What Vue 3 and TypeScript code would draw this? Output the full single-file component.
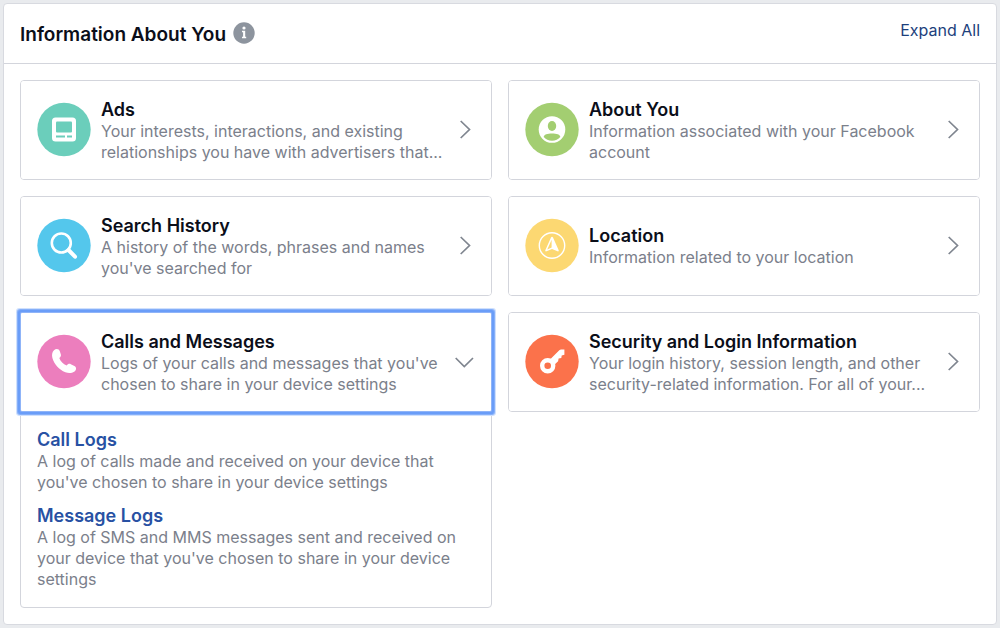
<script setup lang="ts">
import { computed, ref } from 'vue'

type IconName = 'ads' | 'about' | 'search' | 'location' | 'calls' | 'security'

interface Log {
  title: string
  text: string
}

interface Category {
  id: IconName
  title: string
  text: string
  color: string
  logs: Log[]
}

const categories: Category[] = [
  {
    id: 'ads',
    title: 'Ads',
    text: 'Your interests, interactions, and existing relationships you have with advertisers that...',
    color: '#6bcebb',
    logs: [],
  },
  {
    id: 'about',
    title: 'About You',
    text: 'Information associated with your Facebook account',
    color: '#a3ce71',
    logs: [],
  },
  {
    id: 'search',
    title: 'Search History',
    text: "A history of the words, phrases and names you've searched for",
    color: '#54c7ec',
    logs: [],
  },
  {
    id: 'location',
    title: 'Location',
    text: 'Information related to your location',
    color: '#fcd872',
    logs: [],
  },
  {
    id: 'calls',
    title: 'Calls and Messages',
    text: "Logs of your calls and messages that you've chosen to share in your device settings",
    color: '#ec7ebd',
    logs: [
      {
        title: 'Call Logs',
        text: "A log of calls made and received on your device that you've chosen to share in your device settings",
      },
      {
        title: 'Message Logs',
        text: "A log of SMS and MMS messages sent and received on your device that you've chosen to share in your device settings",
      },
    ],
  },
  {
    id: 'security',
    title: 'Security and Login Information',
    text: 'Your login history, session length, and other security-related information. For all of your...',
    color: '#fb724b',
    logs: [],
  },
]

const open = ref<IconName[]>(['calls'])
const active = ref<IconName | null>('calls')
const isOpen = computed(() => (id: IconName) => open.value.includes(id))

function toggle(id: IconName): void {
  active.value = id
  open.value = open.value.includes(id)
    ? open.value.filter((item) => item !== id)
    : [...open.value, id]
}

function expandAll(): void {
  open.value = categories.map((category) => category.id)
}
</script>

<template>
  <main class="page">
    <section class="panel" aria-labelledby="panel-title">
      <header class="panel-header">
        <div class="heading">
          <h1 id="panel-title">Information About You</h1>
          <button class="info" type="button" aria-label="More information">
            <svg viewBox="0 0 22 22" aria-hidden="true">
              <circle cx="11" cy="11" r="10.7" fill="#8d949e" />
              <circle cx="11" cy="6" r="1.6" fill="#fff" />
              <path d="M9 8.800h3.200v6h1v1.500H9v-1.500h1.100v-4.500H9z" fill="#fff" />
            </svg>
          </button>
        </div>
        <a class="expand" href="#" @click.prevent="expandAll">Expand All</a>
      </header>

      <div class="grid">
        <article v-for="category in categories" :key="category.id" class="card">
          <button
            class="card-head"
            :class="{ active: active === category.id }"
            type="button"
            :aria-expanded="isOpen(category.id)"
            @click="toggle(category.id)"
          >
            <svg class="icon" viewBox="0 0 54 54" aria-hidden="true">
              <circle cx="27" cy="26.5" r="26.7" :fill="category.color" />
              <g v-if="category.id === 'ads'">
                <rect x="15" y="14.500" width="24" height="24" rx="3.500" fill="#fff" />
                <rect x="19" y="18.500" width="16" height="11" rx="1" :fill="category.color" />
                <path d="M19 32.500h9v2h-9zM30 32.500h5v2h-5z" :fill="category.color" />
              </g>
              <g v-else-if="category.id === 'about'">
                <circle cx="27" cy="26.500" r="13.300" fill="#fff" />
                <ellipse cx="27" cy="23" rx="4.200" ry="5" :fill="category.color" />
                <path
                  d="M18.700 34c0-2.500 3.800-3.600 8.300-3.600s8.300 1.100 8.300 3.600c-1.900 2.300-5 3.700-8.300 3.700s-6.400-1.400-8.300-3.700z"
                  :fill="category.color"
                />
              </g>
              <g v-else-if="category.id === 'search'" fill="none" stroke="#fff">
                <circle cx="24.300" cy="24" r="9.500" stroke-width="2.600" />
                <path d="M31.500 31L38 37.700" stroke-width="4" stroke-linecap="round" />
              </g>
              <g v-else-if="category.id === 'location'">
                <circle cx="27" cy="26.500" r="12.700" fill="none" stroke="#fff" stroke-width="1.400" />
                <path
                  fill-rule="evenodd"
                  d="M26 18.500q1-1.500 2 0l5.700 12.800q.3 1.500-1.200 1l-5.500-2.200-5.500 2.200q-1.500.5-1.200-1zM26.600 20.800l-4.300 9.700 4.300-2z"
                  fill="#fff"
                />
              </g>
              <path
                v-else-if="category.id === 'calls'"
                d="M17 15.200c2-1.700 5-1.400 5.800 1l1 3c.5 1.600-.2 2.800-1.500 3.700 1.200 3.400 4 6.200 7.300 7.700 1.200-1.500 2.600-2.200 4.200-1.400l3.600 1.700c2.500 1.200 2 4.500-.3 5.900-2.200 1.500-5.700 1.700-8.700.5-6.300-2.600-11.300-8.200-13-14.300-.7-2.900-.4-6.100 1.600-7.800z"
                fill="#fff"
              />
              <g v-else>
                <path
                  d="M24 25.500l10.300-10.300q.8-.8 1.800-.8h3.300v5.400l-2.700.8-.4 2.500-2.700.5-.5 2.700-4.300 4z"
                  fill="#fff"
                />
                <circle cx="22.700" cy="30.800" r="5.500" :fill="category.color" stroke="#fff" stroke-width="4.400" />
              </g>
            </svg>
            <span class="copy">
              <span class="title">{{ category.title }}</span>
              <span class="text">{{ category.text }}</span>
            </span>
            <svg class="chevron" viewBox="0 0 20 20" aria-hidden="true">
              <path
                :d="isOpen(category.id) ? 'M.7 6L9.300 14.500 18 6' : 'M5.700 1L14.500 9.500 5.700 18'"
                fill="none"
                stroke="#7f858f"
                stroke-width="1.700"
              />
            </svg>
          </button>
          <ul v-if="isOpen(category.id) && category.logs.length" class="logs">
            <li v-for="log in category.logs" :key="log.title">
              <a class="title log-link" href="#" @click.prevent>{{ log.title }}</a>
              <p class="text">{{ log.text }}</p>
            </li>
          </ul>
        </article>
      </div>
    </section>
  </main>
</template>

<style>
body {
  background: #e9ebee;
}
</style>

<style scoped>
.page {
  box-sizing: border-box;
  min-height: 100vh;
  padding: 3px;
  font-family: Inter, "Liberation Sans", sans-serif;
  font-size: 16px;
  line-height: 21px;
  color: #0b0e19;
}

.panel {
  background: #fff;
  border: 1px solid #d8dae0;
  border-radius: 4px;
}

.panel-header {
  display: flex;
  justify-content: space-between;
  align-items: flex-start;
  padding: 16px 16px 15px;
  border-bottom: 1px solid #d3d5dc;
}

.heading {
  display: flex;
  align-items: flex-start;
  gap: 7px;
  padding-top: 2px;
}

h1 {
  margin: 0;
  font-size: 19px;
  line-height: 26px;
  font-weight: 600;
}

.info {
  width: 22px;
  height: 22px;
  padding: 0;
  border: 0;
  background: none;
  cursor: pointer;
}

.info svg {
  display: block;
}

.expand {
  color: #1d3f7c;
  text-decoration: none;
}

.grid {
  display: grid;
  grid-template-columns: 1fr 1fr;
  align-items: start;
  gap: 16px;
  padding: 16px;
}

.card {
  border: 1px solid #d3d5dc;
  border-radius: 4px;
}

.card-head {
  display: flex;
  align-items: center;
  gap: 10px;
  box-sizing: border-box;
  width: 100%;
  min-height: 98px;
  padding: 12px 16px;
  border: 0;
  border-radius: 3px;
  background: #fff;
  color: inherit;
  font: inherit;
  text-align: left;
  cursor: pointer;
}

.card-head:focus {
  outline: none;
}

.card-head.active {
  border-radius: 1px;
  box-shadow: 0 0 0 1px #8fb4f8, 0 0 0 3px #6a9df8, 0 0 0 4px #85aff9, 0 0 0 5px #cfe0fd;
}

.icon {
  flex: none;
  width: 54px;
  height: 54px;
  overflow: visible;
}

.copy {
  flex: 1;
  min-width: 0;
}

.chevron {
  flex: none;
  width: 20px;
  height: 20px;
}

.title {
  display: block;
  font-size: 18px;
  line-height: 23px;
  font-weight: 600;
}

.text {
  display: block;
  margin: 0;
  color: #7b808b;
}

.logs {
  margin: 0;
  padding: 17px 16px;
  list-style: none;
}

.logs li + li {
  margin-top: 11px;
}

.log-link {
  color: #2851a3;
  text-decoration: none;
}
</style>
